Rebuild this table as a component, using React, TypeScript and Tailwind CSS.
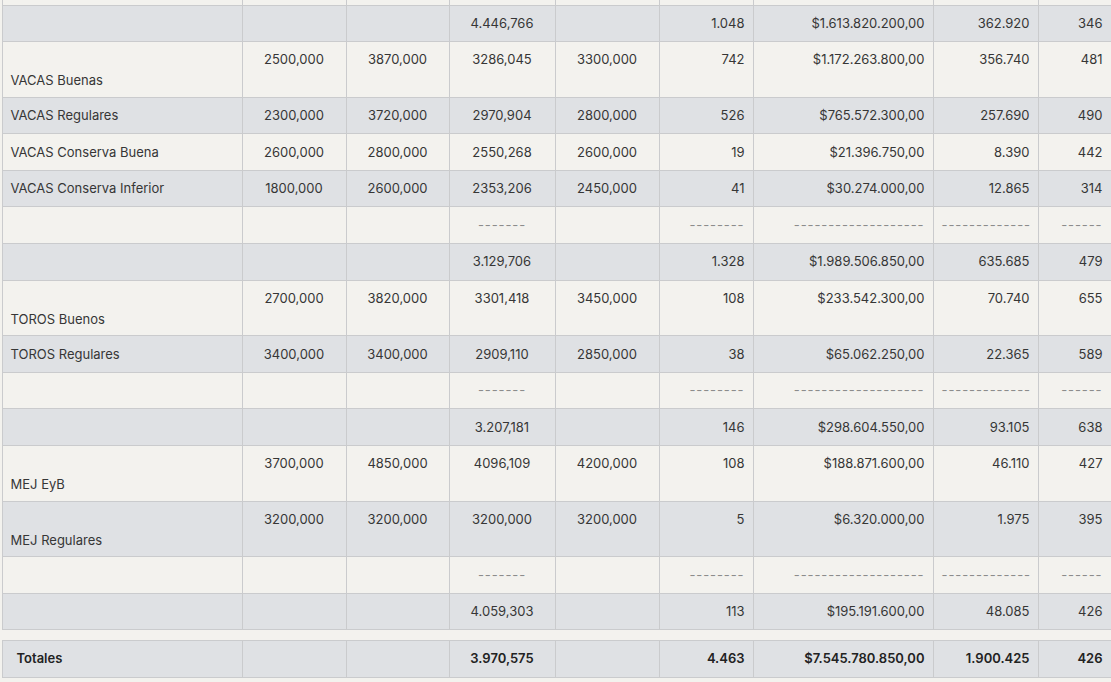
import React from 'react'

type Row = {
  cells: string[]
  tall?: boolean
  dashes?: boolean
}

const dashRow = ['', '', '', '-------', '', '--------', '-------------------', '-------------', '------']

const rows: Row[] = [
  { cells: ['', '', '', '4.446,766', '', '1.048', '$1.613.820.200,00', '362.920', '346'] },
  { cells: ['VACAS Buenas', '2500,000', '3870,000', '3286,045', '3300,000', '742', '$1.172.263.800,00', '356.740', '481'], tall: true },
  { cells: ['VACAS Regulares', '2300,000', '3720,000', '2970,904', '2800,000', '526', '$765.572.300,00', '257.690', '490'] },
  { cells: ['VACAS Conserva Buena', '2600,000', '2800,000', '2550,268', '2600,000', '19', '$21.396.750,00', '8.390', '442'] },
  { cells: ['VACAS Conserva Inferior', '1800,000', '2600,000', '2353,206', '2450,000', '41', '$30.274.000,00', '12.865', '314'] },
  { cells: dashRow, dashes: true },
  { cells: ['', '', '', '3.129,706', '', '1.328', '$1.989.506.850,00', '635.685', '479'] },
  { cells: ['TOROS Buenos', '2700,000', '3820,000', '3301,418', '3450,000', '108', '$233.542.300,00', '70.740', '655'], tall: true },
  { cells: ['TOROS Regulares', '3400,000', '3400,000', '2909,110', '2850,000', '38', '$65.062.250,00', '22.365', '589'] },
  { cells: dashRow, dashes: true },
  { cells: ['', '', '', '3.207,181', '', '146', '$298.604.550,00', '93.105', '638'] },
  { cells: ['MEJ EyB', '3700,000', '4850,000', '4096,109', '4200,000', '108', '$188.871.600,00', '46.110', '427'], tall: true },
  { cells: ['MEJ Regulares', '3200,000', '3200,000', '3200,000', '3200,000', '5', '$6.320.000,00', '1.975', '395'], tall: true },
  { cells: dashRow, dashes: true },
  { cells: ['', '', '', '4.059,303', '', '113', '$195.191.600,00', '48.085', '426'] },
]

const totals = ['Totales', '', '', '3.970,575', '', '4.463', '$7.545.780.850,00', '1.900.425', '426']

// column alignment: name left, prices centered, the rest right
const align = ['text-left', 'text-center', 'text-center', 'text-center', 'text-center', 'text-right', 'text-right', 'text-right', 'text-right']

function Cols() {
  return (
    <colgroup>
      <col className="w-[240px]" />
      <col className="w-[104px]" />
      <col className="w-[103px]" />
      <col className="w-[106px]" />
      <col className="w-[104px]" />
      <col className="w-[94px]" />
      <col className="w-[180px]" />
      <col className="w-[105px]" />
      <col className="w-[73px]" />
    </colgroup>
  )
}

export default function App() {
  return (
    <div
      className="h-[682px] w-[1111px] overflow-hidden bg-[#f3f2ee] text-[13px] leading-[19px] text-[#363636]"
      style={{ fontFamily: 'Inter, "Noto Sans", sans-serif' }}
    >
      <div className="pl-[1.5px]">
        <table className="w-[1109px] table-fixed border-collapse">
          <Cols />
          <tbody>
            {/* tail of the row above, cut by the scroll */}
            <tr className="bg-[#f3f2ee]">
              {align.map((_, i) => (
                <td key={i} className="h-[5px] border-x border-b border-[#cacbcd] p-0" />
              ))}
            </tr>
            {rows.map((row, r) => (
              <tr key={r} className={r % 2 === 0 ? 'bg-[#dfe1e4]' : 'bg-[#f3f2ee]'}>
                {row.cells.map((c, i) => {
                  const nameTall = i === 0 && row.tall
                  return (
                    <td
                      key={i}
                      className={`border border-[#cacbcd] px-2 align-top whitespace-nowrap ${align[i]} ${
                        nameTall ? 'pt-[10.3px] pb-[6.3px]' : 'py-[8.3px]'
                      } ${row.dashes ? 'tracking-[0.9px] text-[#8c8c8c]' : ''}`}
                    >
                      {nameTall ? (
                        <>
                          <br />
                          {c}
                        </>
                      ) : (
                        c || '\u00a0'
                      )}
                    </td>
                  )
                })}
              </tr>
            ))}
          </tbody>
        </table>

        <table className="mt-[9.5px] w-[1109px] table-fixed border-collapse">
          <Cols />
          <tbody>
            <tr className="bg-[#dfe1e4] font-semibold text-[#222222]">
              {totals.map((c, i) => (
                <td
                  key={i}
                  className={`border border-[#cacbcd] py-[8.3px] align-top whitespace-nowrap ${align[i]} ${
                    i === 0 ? 'pl-[14px] pr-2' : 'px-2'
                  }`}
                >
                  {c || '\u00a0'}
                </td>
              ))}
            </tr>
          </tbody>
        </table>
      </div>
    </div>
  )
}
